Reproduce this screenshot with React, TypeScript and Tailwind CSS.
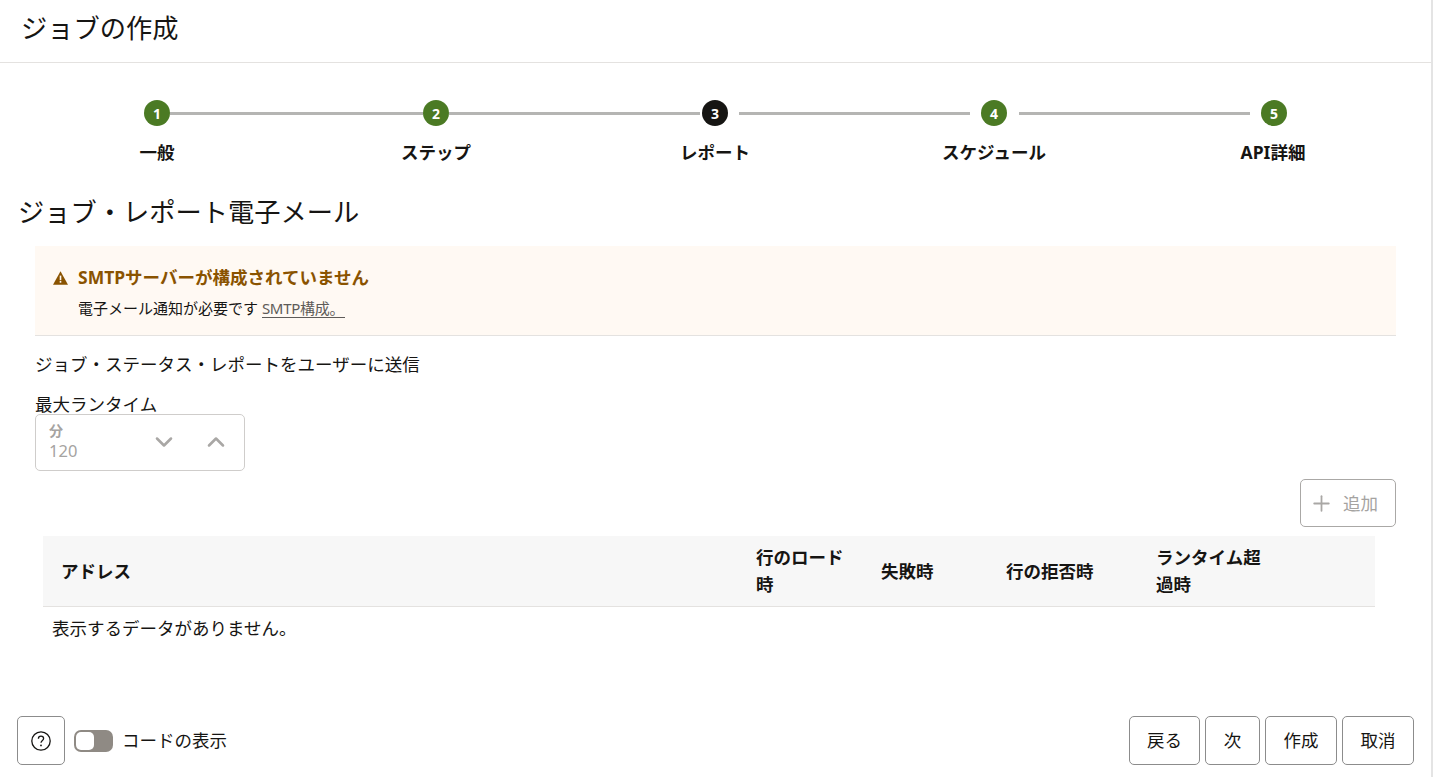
import React from "react";
import { Plus, ChevronDown, ChevronUp } from "lucide-react";

const labels = ["一般", "ステップ", "レポート", "スケジュール", "API詳細"];

function Dot({ n, dark }: { n: string; dark?: boolean }) {
  return (
    <div
      className={`w-[26px] h-[26px] shrink-0 rounded-full flex items-center justify-center text-white text-[14px] font-bold ${dark ? "bg-[#161513]" : "bg-[#4b7a24]"}`}
    >
      {n}
    </div>
  );
}

function Line({ w }: { w: string }) {
  return <div className={`h-[3px] ${w} shrink-0 bg-[#b5b5b3]`} />;
}

function Btn({ children, w }: { children: React.ReactNode; w: string }) {
  return (
    <button className={`h-[49px] ${w} rounded-[5px] border border-[#8c8c8c] bg-white text-[17.5px] text-[#161513] flex items-center justify-center`}>
      {children}
    </button>
  );
}

export default function App() {
  return (
    <div
      className="w-[1433px] h-[777px] overflow-hidden bg-white text-[#161513] flex flex-col border-r-2 border-[#e4e4e4]"
      style={{ fontFamily: '"Noto Sans", "Noto Sans CJK JP", sans-serif' }}
    >
      <header className="h-[63px] shrink-0 border-b border-[#e4e2e0] pl-[21px] flex items-center">
        <h1 className="text-[26.25px] leading-[32px] font-normal pb-[6px]">ジョブの作成</h1>
      </header>

      <div className="pl-[144px] pt-[37px] flex items-center">
        <Dot n="1" />
        <Line w="w-[253px]" />
        <Dot n="2" />
        <Line w="w-[251px]" />
        <div className="w-[2px] shrink-0" />
        <Dot n="3" dark />
        <div className="w-[11px] shrink-0" />
        <Line w="w-[231px]" />
        <div className="w-[11px] shrink-0" />
        <Dot n="4" />
        <div className="w-[12px] shrink-0" />
        <Line w="w-[231px]" />
        <div className="w-[11px] shrink-0" />
        <Dot n="5" />
      </div>

      <div className="pl-[17.5px] mt-[14px] grid grid-cols-[repeat(5,279px)] text-[17.5px] leading-[24px] font-bold text-center">
        {labels.map((l) => (
          <div key={l}>{l}</div>
        ))}
      </div>

      <h2 className="pl-[18px] mt-[32px] text-[26.25px] leading-[32px] font-normal">ジョブ・レポート電子メール</h2>

      <div className="mx-[35px] mt-[18px] h-[90px] shrink-0 bg-[#fff9f3] border-b border-[#e4e2e0] pl-[18px] pt-[19px]">
        <div className="flex items-center gap-[10px]">
          <svg width="15" height="14" viewBox="0 0 15 14" className="mt-[1px]">
            <path d="M7.5 0.3 L15 13.7 H0 Z" fill="#8a5300" />
            <rect x="6.7" y="4.6" width="1.6" height="4.6" fill="#fff9f3" />
            <rect x="6.7" y="10" width="1.6" height="1.7" fill="#fff9f3" />
          </svg>
          <span className="text-[17.5px] leading-[24px] font-bold text-[#8a5300]">SMTPサーバーが構成されていません</span>
        </div>
        <div className="ml-[25px] mt-[9px] text-[15px] leading-[20px]">
          電子メール通知が必要です{" "}
          <span className="text-[#5e5b58] border-b border-[#5e5b58] pr-[1px] inline-block leading-[18px] tracking-[-0.3px]">SMTP構成。</span>
        </div>
      </div>

      <div className="pl-[35px] mt-[16px] text-[17.5px] leading-[24px]">ジョブ・ステータス・レポートをユーザーに送信</div>

      <div className="pl-[35px] mt-[16px] text-[17.5px] leading-[24px] h-[22px]">最大ランタイム</div>

      <div className="ml-[35px] w-[210px] h-[57px] shrink-0 rounded-[5px] border border-[#cfcdcb] flex items-center">
        <div className="pl-[13px] flex-1">
          <div className="text-[14px] leading-[16px] font-bold text-[#a5a3a1]">分</div>
          <div className="text-[16.5px] leading-[24px] text-[#a5a3a1]">120</div>
        </div>
        <ChevronDown size={28} strokeWidth={2.2} className="text-[#a9a7a5] mr-[24px] -mt-[2px]" />
        <ChevronUp size={28} strokeWidth={2.2} className="text-[#a9a7a5] mr-[14px] -mt-[2px]" />
      </div>

      <div className="flex justify-end pr-[35px] mt-[8px]">
        <button className="w-[96px] h-[48px] rounded-[5px] border border-[#aaa8a6] flex items-center justify-start pl-[8px] gap-[9px] text-[17.5px] text-[#a5a3a1] bg-white">
          <Plus size={25} strokeWidth={1.7} className="text-[#a9a7a5]" />
          <span>追加</span>
        </button>
      </div>

      <div className="ml-[43px] mr-[56px] mt-[9px] h-[71px] shrink-0 bg-[#f7f7f7] border-b border-[#e4e2e0] flex items-center text-[17.5px] leading-[27px] font-bold">
        <div className="w-[713px] pl-[18px]">アドレス</div>
        <div className="w-[125px]">行のロード<br />時</div>
        <div className="w-[125px]">失敗時</div>
        <div className="w-[150px]">行の拒否時</div>
        <div className="w-[112px]">ランタイム超<br />過時</div>
      </div>

      <div className="pl-[52px] mt-[9px] text-[17.5px] leading-[24px]">表示するデータがありません。</div>

      <footer className="mt-auto h-[61px] shrink-0 pl-[17px] pr-[17px] flex items-start justify-between">
        <div className="flex items-center h-[49px]">
          <button className="w-[48px] h-[49px] rounded-[5px] border border-[#8c8c8c] flex items-center justify-center">
            <svg width="20" height="20" viewBox="0 0 20 20" fill="none" stroke="#161513" strokeWidth="1.3">
              <circle cx="10" cy="10" r="9.2" />
              <path d="M7.4 7.8 C7.4 6 8.7 5.2 10 5.2 C11.4 5.2 12.6 6.1 12.6 7.5 C12.6 9.4 10 9.5 10 11.8" />
              <circle cx="10" cy="14.4" r="0.9" fill="#161513" stroke="none" />
            </svg>
          </button>
          <div className="ml-[9px] w-[39px] h-[22px] rounded-[7px] bg-[#8f8a84] p-[2px]">
            <div className="w-[18px] h-[18px] rounded-[5px] bg-white" />
          </div>
          <span className="ml-[9px] text-[17.5px]">コードの表示</span>
        </div>
        <div className="flex gap-[5px]">
          <Btn w="w-[71px]">戻る</Btn>
          <Btn w="w-[55px]">次</Btn>
          <Btn w="w-[72px]">作成</Btn>
          <Btn w="w-[72px]">取消</Btn>
        </div>
      </footer>
    </div>
  );
}
